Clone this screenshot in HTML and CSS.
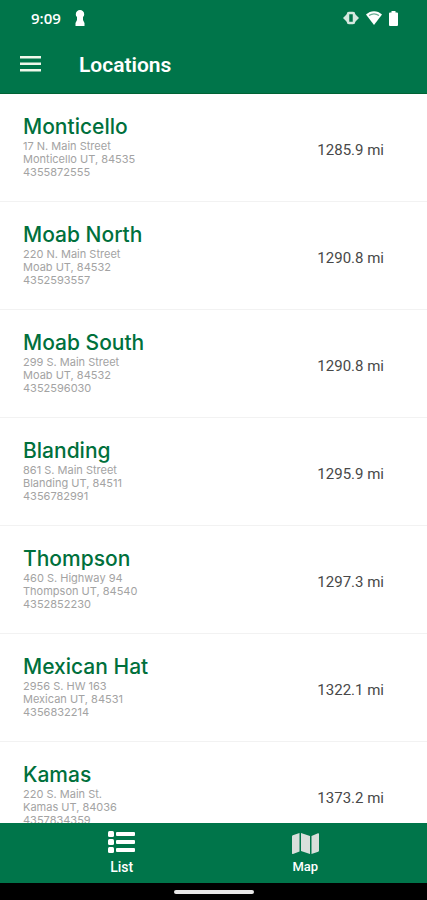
FILE: index.html
```html
<!DOCTYPE html>
<html lang="en">
<head>
  <meta charset="UTF-8">
  <meta name="viewport" content="width=device-width, initial-scale=1.0">
  <title>Locations</title>
  <link rel="stylesheet" href="styles.css">
</head>
<body>
<header class="header">
  <div class="status-bar">
    <span class="clock">9:09</span>
    <svg width="10" height="16" viewBox="0 0 10 16" fill="#fff"><path d="M5 0a4.200 4.200 0 0 1 4.200 4.200C9.200 5.500 8.600 6.400 8 7v3l1.500 3v3h-9v-3L2 10V7C1.400 6.400.8 5.500.8 4.200A4.200 4.200 0 0 1 5 0z"/></svg>
    <div class="status-icons">
      <svg width="16" height="14" viewBox="0 0 16 14"><path d="M0 7l4-4v8zM16 7l-4-4v8z" fill="#d5e8df"/><rect x="5" y="2" width="6" height="10" rx="1" fill="none" stroke="#d5e8df" stroke-width="2.500"/></svg>
      <svg width="16" height="14" viewBox="0 0 16 14"><path d="M0 3.500C4.500-1 11.500-1 16 3.500L8 14z" fill="#fff"/><path d="M3 4.500c3-2 7-2 10 0" fill="none" stroke="#00754a" stroke-opacity=".6" stroke-width="1.200"/></svg>
      <svg width="9" height="15" viewBox="0 0 9 15" fill="#fff"><path d="M2.500 1.500V0h4v1.500H8a1 1 0 0 1 1 1V14a1 1 0 0 1-1 1H1a1 1 0 0 1-1-1V2.500a1 1 0 0 1 1-1z"/></svg>
    </div>
  </div>
  <div class="toolbar">
    <button class="menu-btn" type="button" aria-label="Menu">
      <svg width="21" height="16" viewBox="0 0 21 16" fill="#f0f8eb"><path d="M0 0h21v2.500H0zM0 6.500h21V9H0zM0 13h21v2.500H0z"/></svg>
    </button>
    <h1>Locations</h1>
  </div>
</header>

<main class="locations">
  <ul>
    <li class="location">
      <div class="details">
        <h2>Monticello</h2>
        <p>17 N. Main Street</p>
        <p>Monticello UT, 84535</p>
        <p>4355872555</p>
      </div>
      <span class="distance">1285.9 mi</span>
    </li>
    <li class="location">
      <div class="details">
        <h2>Moab North</h2>
        <p>220 N. Main Street</p>
        <p>Moab UT, 84532</p>
        <p>4352593557</p>
      </div>
      <span class="distance">1290.8 mi</span>
    </li>
    <li class="location">
      <div class="details">
        <h2>Moab South</h2>
        <p>299 S. Main Street</p>
        <p>Moab UT, 84532</p>
        <p>4352596030</p>
      </div>
      <span class="distance">1290.8 mi</span>
    </li>
    <li class="location">
      <div class="details">
        <h2>Blanding</h2>
        <p>861 S. Main Street</p>
        <p>Blanding UT, 84511</p>
        <p>4356782991</p>
      </div>
      <span class="distance">1295.9 mi</span>
    </li>
    <li class="location">
      <div class="details">
        <h2>Thompson</h2>
        <p>460 S. Highway 94</p>
        <p>Thompson UT, 84540</p>
        <p>4352852230</p>
      </div>
      <span class="distance">1297.3 mi</span>
    </li>
    <li class="location">
      <div class="details">
        <h2>Mexican Hat</h2>
        <p>2956 S. HW 163</p>
        <p>Mexican UT, 84531</p>
        <p>4356832214</p>
      </div>
      <span class="distance">1322.1 mi</span>
    </li>
    <li class="location">
      <div class="details">
        <h2>Kamas</h2>
        <p>220 S. Main St.</p>
        <p>Kamas UT, 84036</p>
        <p>4357834359</p>
      </div>
      <span class="distance">1373.2 mi</span>
    </li>
  </ul>
</main>

<nav class="tabs">
  <a class="tab active" href="#list">
    <svg width="27" height="24" viewBox="0 0 27 24" fill="#fff"><rect y="1" width="6" height="6" rx="1.500"/><rect y="9" width="6" height="6" rx="1.500"/><rect y="17" width="6" height="6" rx="1.500"/><rect x="8" y="2" width="19" height="4" rx="1"/><rect x="8" y="10" width="19" height="4" rx="1"/><rect x="8" y="18" width="19" height="4" rx="1"/></svg>
    <span>List</span>
  </a>
  <a class="tab" href="#map">
    <svg width="27" height="24" viewBox="0 0 27 24" fill="#d9dfdb"><path d="M0 6.500q0-.8.800-1.200L7.500 3v18.500L1 24q-1 .2-1-.8zM9 3l9 3v18l-9-3zM19.500 6L26 3.200q1-.2 1 .8v16.500q0 .8-.8 1.200L19.500 24z"/></svg>
    <span>Map</span>
  </a>
</nav>

<footer class="home-bar">
  <div class="home-handle"></div>
</footer>
</body>
</html>
```

FILE: styles.css
```css
* {
  box-sizing: border-box;
}

body {
  margin: 0;
  height: 100vh;
  display: flex;
  flex-direction: column;
  font-family: Roboto, "Liberation Sans", sans-serif;
  background-color: #ffffff;
}

h1, h2, p, ul {
  margin: 0;
  padding: 0;
}

ul {
  list-style: none;
}

.header {
  flex: none;
  background-color: #00754a;
  border-bottom: 1px solid #006334;
  color: #ffffff;
}

.status-bar {
  display: flex;
  align-items: center;
  height: 36px;
  padding: 0 29px 0 31px;
}

.clock {
  margin-right: 14px;
  font-family: "Open Sans", sans-serif;
  font-size: 15px;
  font-weight: 600;
}

.status-icons {
  display: flex;
  align-items: center;
  gap: 7px;
  margin-left: auto;
}

.toolbar {
  display: flex;
  align-items: center;
  gap: 38px;
  height: 57px;
  padding: 0 20px;
}

.menu-btn {
  display: flex;
  padding: 0 0 2px;
  border: none;
  background: none;
  cursor: pointer;
}

h1 {
  font-size: 21px;
  font-weight: 600;
  line-height: 24px;
}

.locations {
  flex: 1;
  min-height: 0;
  overflow: hidden;
}

.location {
  display: flex;
  align-items: center;
  justify-content: space-between;
  height: 108px;
  padding: 4px 43px 0 23px;
  border-bottom: 1px solid #f2f2f2;
}

.details {
  padding-bottom: 5px;
  font-family: Inter, sans-serif;
}

h2 {
  margin-bottom: 1px;
  font-size: 21px;
  font-weight: 500;
  line-height: 24px;
  color: #00703c;
}

p {
  font-size: 11px;
  line-height: 13px;
  color: #a3a3a3;
}

.distance {
  font-size: 15px;
  color: #484848;
}

.tabs {
  flex: none;
  display: flex;
  justify-content: center;
  height: 60px;
  background-color: #00754a;
}

.tab {
  display: flex;
  flex-direction: column;
  align-items: center;
  gap: 4px;
  width: 43%;
  padding-top: 7px;
  font-size: 13px;
  line-height: 18px;
  font-weight: 500;
  color: #ffffff;
  text-decoration: none;
}

.tab.active {
  font-size: 14px;
}

.home-bar {
  flex: none;
  display: flex;
  align-items: center;
  justify-content: center;
  height: 17px;
  background-color: #000000;
}

.home-handle {
  width: 80px;
  height: 4px;
  border-radius: 2px;
  background-color: #e8e8e8;
}
```
